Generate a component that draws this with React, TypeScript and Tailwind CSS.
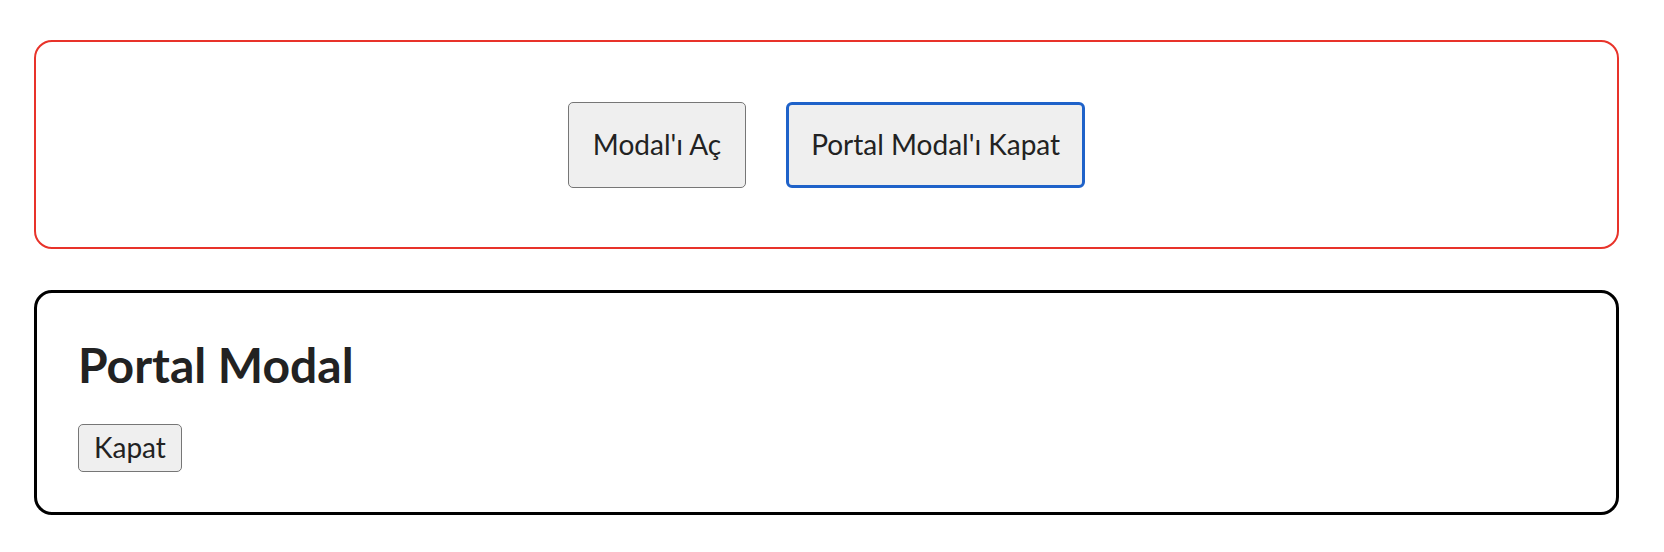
import { useState } from "react";

export default function App() {
    const [open, setOpen] = useState(true);

    return (
        <div className="min-h-screen bg-white text-[#222] font-['Lato',sans-serif] pt-[40px] pl-[34px] pr-[45px]">
            <section className="border-2 border-[#e8332a] rounded-[18px] pt-[60px] pb-[59px] flex items-center justify-center gap-[40px]">
                <button
                    onClick={() => setOpen(true)}
                    className="bg-[#efefef] border border-[#767676] rounded-[5px] px-[24px] py-[25px] text-[28px] leading-[1.2] text-[#222]"
                >
                    Modal'ı Aç
                </button>
                <button
                    onClick={() => setOpen(false)}
                    className="bg-[#efefef] border-[3px] border-[#1f62c9] rounded-[6px] px-[22px] py-[23px] text-[28px] leading-[1.2] text-[#222]"
                >
                    Portal Modal'ı Kapat
                </button>
            </section>

            {open && (
                <div className="mt-[41px] border-[3px] border-black rounded-[18px] px-[41px] py-[40px]">
                    <h2 className="mt-[3px] text-[48px] font-bold leading-[1.2] text-[#222]">Portal Modal</h2>
                    <button
                        onClick={() => setOpen(false)}
                        className="mt-[31px] bg-[#efefef] border border-[#767676] rounded-[5px] px-[15px] py-[6px] text-[28px] leading-[1.2] text-[#222]"
                    >
                        Kapat
                    </button>
                </div>
            )}
        </div>
    );
}
